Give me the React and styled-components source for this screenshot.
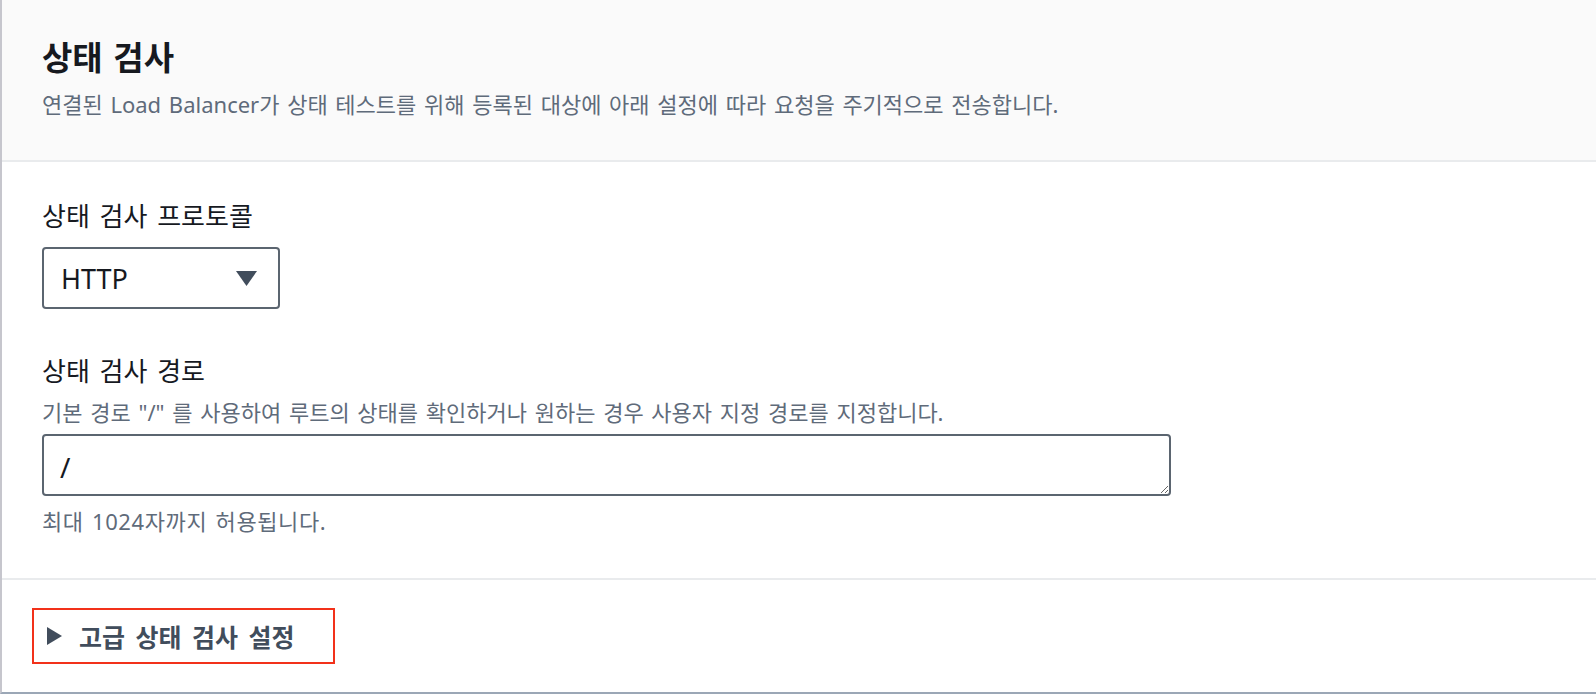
import React from "react";
import styled, { createGlobalStyle } from "styled-components";

const GlobalStyle = createGlobalStyle`
  html, body {
    margin: 0;
    padding: 0;
    background: #ffffff;
  }
  body {
    font-family: "Noto Sans", "Noto Sans CJK KR", sans-serif;
    color: #16191f;
  }
`;

const Card = styled.section`
  height: 694px;
  box-sizing: border-box;
  border-left: 2px solid #c6c6cd;
  border-bottom: 2px solid #9ba7b6;
  display: flex;
  flex-direction: column;
  overflow: hidden;
`;

const Header = styled.header`
  background: #fafafa;
  border-bottom: 2px solid #e9ebed;
  padding: 39px 40px 42px;
`;

const Title = styled.h2`
  margin: 0;
  font-size: 33px;
  line-height: 38px;
  font-weight: 700;
  color: #16191f;
  word-spacing: 2px;
`;

const Description = styled.p`
  margin: ${(p) => p.$top || 0}px 0 0;
  font-size: 22px;
  line-height: 28px;
  color: #5f6b7a;
  word-spacing: 2px;
`;

const Body = styled.div`
  padding: 38px 40px 43px;
  border-bottom: 2px solid #e9ebed;
  display: flex;
  flex-direction: column;
  align-items: flex-start;
`;

const Field = styled.div`
  display: flex;
  flex-direction: column;
  align-items: flex-start;
  margin-top: ${(p) => p.$top || 0}px;
`;

const Label = styled.label`
  font-size: 26px;
  line-height: 32px;
  color: #16191f;
  word-spacing: 3px;
`;

const SelectBox = styled.div`
  margin-top: 15px;
  width: 238px;
  height: 62px;
  box-sizing: border-box;
  border: 2px solid #5b6570;
  border-radius: 4px;
  display: flex;
  align-items: center;
  justify-content: space-between;
  padding: 0 21px 0 17px;
  font-size: 27px;
  color: #16191f;
`;

const Caret = styled.svg`
  width: 21px;
  height: 15px;
  fill: #414d5c;
`;

const PathInput = styled.textarea`
  margin-top: 8px;
  width: 1129px;
  height: 62px;
  box-sizing: border-box;
  border: 2px solid #5b6570;
  border-radius: 4px;
  padding: 14px 16px 10px;
  font-family: "Noto Sans", "Noto Sans CJK KR", sans-serif;
  font-size: 28px;
  line-height: 34px;
  color: #16191f;
  resize: vertical;
  outline: none;
  overflow: hidden;
`;

const Hint = styled.div`
  margin-top: 11px;
  font-size: 22px;
  line-height: 28px;
  color: #5f6b7a;
  letter-spacing: 0.6px;
  word-spacing: 2px;
`;

const Footer = styled.div`
  padding: 28px 30px 0;
`;

const ExpandToggle = styled.div`
  display: inline-flex;
  align-items: center;
  gap: 17px;
  height: 56px;
  box-sizing: border-box;
  border: 2px solid #f2311a;
  padding: 0 38px 0 13px;
  font-size: 25px;
  font-weight: 700;
  color: #414d5c;
  word-spacing: 4px;
`;

const Arrow = styled.svg`
  width: 15px;
  height: 18px;
  fill: #414d5c;
`;

export default function App() {
  return (
    <>
      <GlobalStyle />
      <Card>
        <Header>
          <Title>상태 검사</Title>
          <Description $top={13}>
            연결된 Load Balancer가 상태 테스트를 위해 등록된 대상에 아래 설정에 따라 요청을 주기적으로 전송합니다.
          </Description>
        </Header>
        <Body>
          <Field>
            <Label>상태 검사 프로토콜</Label>
            <SelectBox>
              <span>HTTP</span>
              <Caret viewBox="0 0 21 15">
                <polygon points="0,0 21,0 10.5,15" />
              </Caret>
            </SelectBox>
          </Field>
          <Field $top={46}>
            <Label>상태 검사 경로</Label>
            <Description $top={11}>
              기본 경로 "/" 를 사용하여 루트의 상태를 확인하거나 원하는 경우 사용자 지정 경로를 지정합니다.
            </Description>
            <PathInput defaultValue="/" />
            <Hint>최대 1024자까지 허용됩니다.</Hint>
          </Field>
        </Body>
        <Footer>
          <ExpandToggle>
            <Arrow viewBox="0 0 15 18">
              <polygon points="0,0 15,9 0,18" />
            </Arrow>
            <span>고급 상태 검사 설정</span>
          </ExpandToggle>
        </Footer>
      </Card>
    </>
  );
}
